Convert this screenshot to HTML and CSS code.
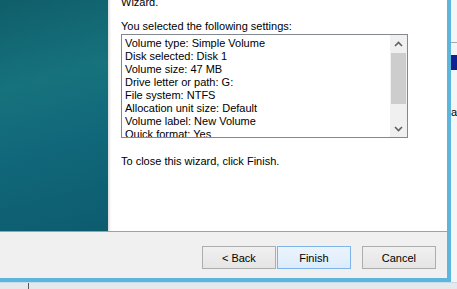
FILE: index.html
```html
<!DOCTYPE html>
<html lang="en">
<head>
    <meta charset="UTF-8">
    <meta name="viewport" content="width=device-width, initial-scale=1.0">
    <title>New Simple Volume Wizard</title>
    <link rel="stylesheet" href="styles.css">
</head>
<body>
    <div class="screen">
        <div class="top-row">
            <div class="window">
                <div class="main">
                    <div class="sidebar"></div>
                    <div class="content">
                        <p class="line intro">Wizard.</p>
                        <p class="line label">You selected the following settings:</p>
                        <div class="listbox">
                            <div class="list-items">
                                <div class="line">Volume type: Simple Volume</div>
                                <div class="line">Disk selected: Disk 1</div>
                                <div class="line">Volume size: 47 MB</div>
                                <div class="line">Drive letter or path: G:</div>
                                <div class="line">File system: NTFS</div>
                                <div class="line">Allocation unit size: Default</div>
                                <div class="line">Volume label: New Volume</div>
                                <div class="line">Quick format: Yes</div>
                            </div>
                            <div class="scrollbar">
                                <div class="arrow">
                                    <svg width="9" height="6" viewBox="0 0 9 6"><path d="M1 5 L4.5 1.5 L8 5" fill="none" stroke="#606060" stroke-width="1.6"/></svg>
                                </div>
                                <div class="track">
                                    <div class="thumb"></div>
                                </div>
                                <div class="arrow">
                                    <svg width="9" height="6" viewBox="0 0 9 6"><path d="M1 1 L4.5 4.5 L8 1" fill="none" stroke="#606060" stroke-width="1.6"/></svg>
                                </div>
                            </div>
                        </div>
                        <p class="line closing">To close this wizard, click Finish.</p>
                    </div>
                </div>
                <div class="footer">
                    <button class="btn">&lt; Back</button>
                    <button class="btn default">Finish</button>
                    <button class="btn cancel">Cancel</button>
                </div>
            </div>
            <div class="behind-right">
                <div class="behind-line"></div>
                <div class="behind-bar"></div>
                <div class="behind-text">a</div>
            </div>
        </div>
        <div class="behind-bottom">
            <div class="behind-divider"></div>
        </div>
    </div>
</body>
</html>
```

FILE: styles.css
```css
body {
    margin: 0;
    padding: 0;
    overflow: hidden;
    font-family: 'Liberation Sans', Arial, sans-serif;
    font-size: 11px;
    color: #000;
    background-color: #eceef0;
}

.screen {
    width: 457px;
    height: 289px;
    display: flex;
    flex-direction: column;
}

.top-row {
    display: flex;
    height: 282px;
}

.window {
    width: 448px;
    height: 278px;
    border-right: 4px solid #5bb5dc;
    border-bottom: 4px solid #5bb5dc;
    display: flex;
    flex-direction: column;
    background: #fff;
}

.main {
    height: 231px;
    display: flex;
    border-bottom: 1px solid #a0a0a0;
}

.sidebar {
    width: 108px;
    background: linear-gradient(165deg, #0f5e6a 0%, #16727d 35%, #11687a 60%, #0c5c6e 100%);
}

.content {
    flex: 1;
    padding-left: 13px;
    box-shadow: inset 3px 0 3px -2px rgba(0, 0, 0, 0.18);
    overflow: hidden;
}

.line {
    margin: 0;
    line-height: 13px;
    white-space: nowrap;
}

.intro {
    margin-top: -4px;
}

.label {
    margin-top: 11px;
    margin-bottom: 1px;
}

.listbox {
    width: 285px;
    height: 102px;
    border: 1px solid #828790;
    display: flex;
    overflow: hidden;
}

.list-items {
    flex: 1;
    padding: 2px 0 0 3px;
    overflow: hidden;
}

.scrollbar {
    width: 17px;
    background: #f0f0f0;
    display: flex;
    flex-direction: column;
}

.arrow {
    height: 17px;
    display: flex;
    align-items: center;
    justify-content: center;
}

.track {
    flex: 1;
    padding-top: 1px;
}

.thumb {
    height: 51px;
    margin: 0 1px;
    background: #cdcdcd;
}

.closing {
    margin-top: 17px;
}

.footer {
    flex: 1;
    background: #f0f0f0;
    display: flex;
    align-items: flex-start;
    padding: 14px 11px 0 0;
    justify-content: flex-end;
    gap: 1px;
}

.btn {
    width: 74px;
    height: 23px;
    padding: 0;
    font-family: 'Liberation Sans', Arial, sans-serif;
    font-size: 11px;
    color: #000;
    border: 1px solid #adadad;
    border-radius: 0;
    background: linear-gradient(#f0f0f0, #e5e5e5);
}

.btn.default {
    border-color: #7eb4ea;
    background: linear-gradient(#ecf4fc, #dcecfc);
}

.btn.cancel {
    margin-left: 10px;
}

.behind-right {
    flex: 1;
    background: #f4f5f6;
    display: flex;
    flex-direction: column;
}

.behind-line {
    height: 1px;
    margin-top: 42px;
    background: #a8a8a8;
}

.behind-bar {
    height: 15px;
    margin-top: 12px;
    background: #10208e;
}

.behind-text {
    margin-top: 36px;
    line-height: 13px;
    overflow: hidden;
}

.behind-bottom {
    flex: 1;
    background: #e6e9ec;
    border-top: 1px solid #c9dbe6;
    display: flex;
}

.behind-divider {
    width: 1px;
    margin-left: 28px;
    background: #5a5a5a;
}
```
